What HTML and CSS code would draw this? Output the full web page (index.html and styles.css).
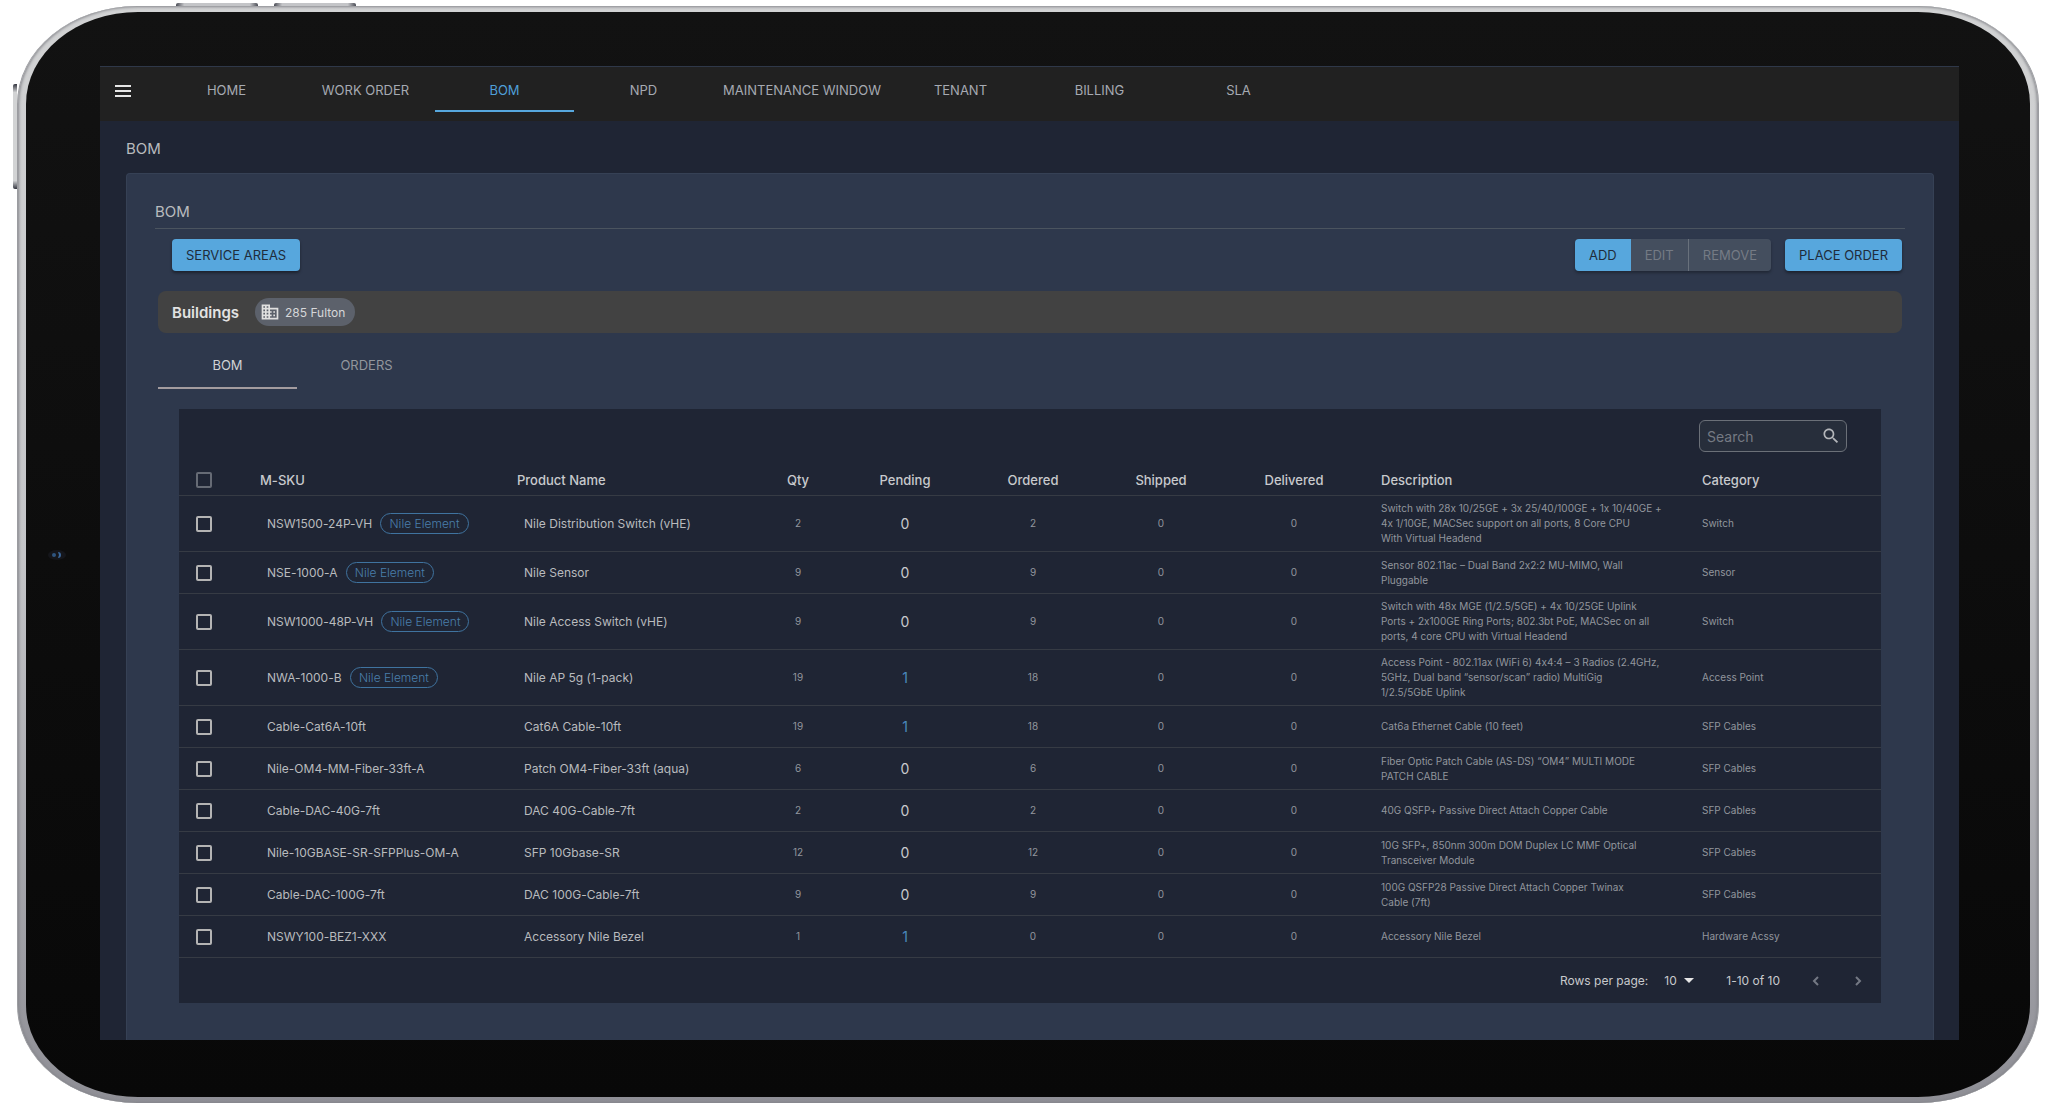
FILE: index.html
```html
<!DOCTYPE html>
<html lang="en">
<head>
    <meta charset="UTF-8">
    <meta name="viewport" content="width=device-width, initial-scale=1.0">
    <title>BOM</title>
    <link rel="stylesheet" href="styles.css">
</head>
<body>
    <div class="tablet">
        <span class="hw-button hw-left"></span>
        <span class="hw-button hw-top-one"></span>
        <span class="hw-button hw-top-two"></span>
        <div class="bezel">
            <svg class="camera" width="20" height="12" viewBox="0 0 20 12" aria-hidden="true">
                <ellipse cx="10" cy="6" rx="9" ry="5" fill="#15161b"/>
                <circle cx="7" cy="6" r="2" fill="#2f5580"/>
                <path d="M11 3a3 3 0 0 1 0 6l1-3z" fill="#3a679b"/>
            </svg>
            <div class="screen">
                <!-- Top navigation -->
                <header class="topbar">
                    <button class="menu-btn" aria-label="Menu">
                        <svg width="16" height="12" viewBox="0 0 16 12"><path d="M0 0h16v2H0zM0 5h16v2H0zM0 10h16v2H0z" fill="#e6e6e6"/></svg>
                    </button>
                    <nav class="nav">
                        <a href="#">HOME</a>
                        <a href="#">WORK ORDER</a>
                        <a href="#" class="active">BOM</a>
                        <a href="#">NPD</a>
                        <a href="#">MAINTENANCE WINDOW</a>
                        <a href="#">TENANT</a>
                        <a href="#">BILLING</a>
                        <a href="#">SLA</a>
                    </nav>
                </header>

                <main class="page">
                    <h1>BOM</h1>
                    <section class="panel">
                        <h2>BOM</h2>

                        <div class="actions">
                            <button class="btn">SERVICE AREAS</button>
                            <div class="btn-group">
                                <button class="btn">ADD</button>
                                <button class="btn" disabled>EDIT</button>
                                <button class="btn" disabled>REMOVE</button>
                            </div>
                            <button class="btn">PLACE ORDER</button>
                        </div>

                        <div class="buildings">
                            <strong>Buildings</strong>
                            <span class="building-chip">
                                <svg width="20" height="20" viewBox="0 0 24 24" aria-hidden="true"><path fill="#e0e0e0" d="M12 7V3H2v18h20V7H12zM6 19H4v-2h2v2zm0-4H4v-2h2v2zm0-4H4V9h2v2zm0-4H4V5h2v2zm4 12H8v-2h2v2zm0-4H8v-2h2v2zm0-4H8V9h2v2zm0-4H8V5h2v2zm10 12h-8v-2h2v-2h-2v-2h2v-2h-2V9h8v10zm-2-8h-2v2h2v-2zm0 4h-2v2h2v-2z"/></svg>
                                285 Fulton
                            </span>
                        </div>

                        <div class="tabs" role="tablist">
                            <button role="tab" aria-selected="true">BOM</button>
                            <button role="tab" aria-selected="false">ORDERS</button>
                        </div>

                        <div class="table-card">
                            <div class="toolbar">
                                <label class="search">
                                    <input type="text" placeholder="Search" aria-label="Search">
                                    <svg width="20" height="20" viewBox="0 0 24 24" aria-hidden="true"><path fill="#b4b6ba" d="M15.5 14h-.79l-.28-.27C15.41 12.59 16 11.11 16 9.5 16 5.91 13.09 3 9.5 3S3 5.91 3 9.5 5.91 16 9.5 16c1.61 0 3.09-.59 4.23-1.57l.27.28v.79l5 4.99L20.49 19l-4.99-5zm-6 0C7.01 14 5 11.99 5 9.5S7.01 5 9.5 5 14 7.01 14 9.5 11.99 14 9.5 14z"/></svg>
                                </label>
                            </div>

                            <table>
                                <colgroup>
                                    <col class="col-check">
                                    <col class="col-sku">
                                    <col class="col-name">
                                    <col class="col-qty">
                                    <col class="col-pending">
                                    <col class="col-ordered">
                                    <col class="col-shipped">
                                    <col class="col-delivered">
                                    <col class="col-desc">
                                    <col class="col-cat">
                                </colgroup>
                                <thead>
                                    <tr>
                                        <th class="check"><input type="checkbox" aria-label="Select all"></th>
                                        <th class="text">M-SKU</th>
                                        <th class="text">Product Name</th>
                                        <th>Qty</th>
                                        <th>Pending</th>
                                        <th>Ordered</th>
                                        <th>Shipped</th>
                                        <th>Delivered</th>
                                        <th class="desc">Description</th>
                                        <th class="desc">Category</th>
                                    </tr>
                                </thead>
                                <tbody>
                                    <tr class="tall">
                                        <td class="check"><input type="checkbox" aria-label="Select NSW1500-24P-VH"></td>
                                        <td class="main">NSW1500-24P-VH <span class="tag">Nile Element</span></td>
                                        <td class="main">Nile Distribution Switch (vHE)</td>
                                        <td>2</td>
                                        <td class="pending">0</td>
                                        <td>2</td>
                                        <td>0</td>
                                        <td>0</td>
                                        <td class="desc">Switch with 28x 10/25GE + 3x 25/40/100GE + 1x 10/40GE +<br>4x 1/10GE, MACSec support on all ports, 8 Core CPU<br>With Virtual Headend</td>
                                        <td class="desc">Switch</td>
                                    </tr>
                                    <tr>
                                        <td class="check"><input type="checkbox" aria-label="Select NSE-1000-A"></td>
                                        <td class="main">NSE-1000-A <span class="tag">Nile Element</span></td>
                                        <td class="main">Nile Sensor</td>
                                        <td>9</td>
                                        <td class="pending">0</td>
                                        <td>9</td>
                                        <td>0</td>
                                        <td>0</td>
                                        <td class="desc">Sensor 802.11ac – Dual Band 2x2:2 MU-MIMO, Wall<br>Pluggable</td>
                                        <td class="desc">Sensor</td>
                                    </tr>
                                    <tr class="tall">
                                        <td class="check"><input type="checkbox" aria-label="Select NSW1000-48P-VH"></td>
                                        <td class="main">NSW1000-48P-VH <span class="tag">Nile Element</span></td>
                                        <td class="main">Nile Access Switch (vHE)</td>
                                        <td>9</td>
                                        <td class="pending">0</td>
                                        <td>9</td>
                                        <td>0</td>
                                        <td>0</td>
                                        <td class="desc">Switch with 48x MGE (1/2.5/5GE) + 4x 10/25GE Uplink<br>Ports + 2x100GE Ring Ports; 802.3bt PoE, MACSec on all<br>ports, 4 core CPU with Virtual Headend</td>
                                        <td class="desc">Switch</td>
                                    </tr>
                                    <tr class="tall">
                                        <td class="check"><input type="checkbox" aria-label="Select NWA-1000-B"></td>
                                        <td class="main">NWA-1000-B <span class="tag">Nile Element</span></td>
                                        <td class="main">Nile AP 5g (1-pack)</td>
                                        <td>19</td>
                                        <td class="pending has-pending">1</td>
                                        <td>18</td>
                                        <td>0</td>
                                        <td>0</td>
                                        <td class="desc">Access Point - 802.11ax (WiFi 6) 4x4:4 – 3 Radios (2.4GHz,<br>5GHz, Dual band “sensor/scan” radio) MultiGig<br>1/2.5/5GbE Uplink</td>
                                        <td class="desc">Access Point</td>
                                    </tr>
                                    <tr>
                                        <td class="check"><input type="checkbox" aria-label="Select Cable-Cat6A-10ft"></td>
                                        <td class="main">Cable-Cat6A-10ft</td>
                                        <td class="main">Cat6A Cable-10ft</td>
                                        <td>19</td>
                                        <td class="pending has-pending">1</td>
                                        <td>18</td>
                                        <td>0</td>
                                        <td>0</td>
                                        <td class="desc">Cat6a Ethernet Cable (10 feet)</td>
                                        <td class="desc">SFP Cables</td>
                                    </tr>
                                    <tr>
                                        <td class="check"><input type="checkbox" aria-label="Select Nile-OM4-MM-Fiber-33ft-A"></td>
                                        <td class="main">Nile-OM4-MM-Fiber-33ft-A</td>
                                        <td class="main">Patch OM4-Fiber-33ft (aqua)</td>
                                        <td>6</td>
                                        <td class="pending">0</td>
                                        <td>6</td>
                                        <td>0</td>
                                        <td>0</td>
                                        <td class="desc">Fiber Optic Patch Cable (AS-DS) “OM4” MULTI MODE<br>PATCH CABLE</td>
                                        <td class="desc">SFP Cables</td>
                                    </tr>
                                    <tr>
                                        <td class="check"><input type="checkbox" aria-label="Select Cable-DAC-40G-7ft"></td>
                                        <td class="main">Cable-DAC-40G-7ft</td>
                                        <td class="main">DAC 40G-Cable-7ft</td>
                                        <td>2</td>
                                        <td class="pending">0</td>
                                        <td>2</td>
                                        <td>0</td>
                                        <td>0</td>
                                        <td class="desc">40G QSFP+ Passive Direct Attach Copper Cable</td>
                                        <td class="desc">SFP Cables</td>
                                    </tr>
                                    <tr>
                                        <td class="check"><input type="checkbox" aria-label="Select Nile-10GBASE-SR-SFPPlus-OM-A"></td>
                                        <td class="main">Nile-10GBASE-SR-SFPPlus-OM-A</td>
                                        <td class="main">SFP 10Gbase-SR</td>
                                        <td>12</td>
                                        <td class="pending">0</td>
                                        <td>12</td>
                                        <td>0</td>
                                        <td>0</td>
                                        <td class="desc">10G SFP+, 850nm 300m DOM Duplex LC MMF Optical<br>Transceiver Module</td>
                                        <td class="desc">SFP Cables</td>
                                    </tr>
                                    <tr>
                                        <td class="check"><input type="checkbox" aria-label="Select Cable-DAC-100G-7ft"></td>
                                        <td class="main">Cable-DAC-100G-7ft</td>
                                        <td class="main">DAC 100G-Cable-7ft</td>
                                        <td>9</td>
                                        <td class="pending">0</td>
                                        <td>9</td>
                                        <td>0</td>
                                        <td>0</td>
                                        <td class="desc">100G QSFP28 Passive Direct Attach Copper Twinax<br>Cable (7ft)</td>
                                        <td class="desc">SFP Cables</td>
                                    </tr>
                                    <tr>
                                        <td class="check"><input type="checkbox" aria-label="Select NSWY100-BEZ1-XXX"></td>
                                        <td class="main">NSWY100-BEZ1-XXX</td>
                                        <td class="main">Accessory Nile Bezel</td>
                                        <td>1</td>
                                        <td class="pending has-pending">1</td>
                                        <td>0</td>
                                        <td>0</td>
                                        <td>0</td>
                                        <td class="desc">Accessory Nile Bezel</td>
                                        <td class="desc">Hardware Acssy</td>
                                    </tr>
                                </tbody>
                            </table>

                            <div class="pagination">
                                <label for="rowsPerPage">Rows per page:</label>
                                <span class="rows-select">
                                    <select id="rowsPerPage">
                                        <option>10</option>
                                        <option>25</option>
                                        <option>50</option>
                                    </select>
                                    <svg width="10" height="5" viewBox="0 0 10 5" aria-hidden="true"><path d="M0 0h10L5 5z" fill="#e6e6e6"/></svg>
                                </span>
                                <span class="range">1-10 of 10</span>
                                <button class="page-btn" aria-label="Previous page"><svg width="8" height="10" viewBox="0 0 8 10"><path d="M6 1L2 5l4 4" fill="none" stroke="#747984" stroke-width="2"/></svg></button>
                                <button class="page-btn" aria-label="Next page"><svg width="8" height="10" viewBox="0 0 8 10"><path d="M2 1l4 4-4 4" fill="none" stroke="#747984" stroke-width="2"/></svg></button>
                            </div>
                        </div>
                    </section>
                </main>
            </div>
        </div>
    </div>
</body>
</html>
```
FILE: styles.css
```css
* {
    box-sizing: border-box;
}
body {
    margin: 0;
    padding: 6px 9px 5px 17px;
    height: 100vh;
    background: #fff;
    font-family: Inter, "Open Sans", sans-serif;
    font-size: 12px;
    font-variant-ligatures: no-contextual; /* keep "10x" as a plain x */
    color: #c8cacd;
}
button, input, select {
    font: inherit;
    color: inherit;
}
button {
    border: none;
    background: none;
    padding: 0;
    cursor: pointer;
}

/* Device frame */
.tablet {
    position: relative;
    height: 100%;
    padding: 6px 8px;
    border: 1px solid #9b9ca0;
    border-width: 0 1px;
    border-radius: 120px / 98px;
    background: linear-gradient(#d2d3d4, #c4c5c8 50%, #8f8f96);
    box-shadow: inset 0 0 3px 1px #85868b;
}
.hw-button {
    position: absolute;
    background: linear-gradient(90deg, #4a4c55, #c4c5c8 10%, #c4c5c8 90%, #4a4c55);
}
.hw-left {
    left: -5px;
    top: 78px;
    width: 4px;
    height: 105px;
    border-radius: 2px 0 0 2px;
    background: linear-gradient(#33353f, #d2d3d4 8%, #d2d3d4 92%, #33353f);
}
.hw-top-one, .hw-top-two {
    top: -3px;
    width: 82px;
    height: 3px;
    border-radius: 2px 2px 0 0;
}
.hw-top-one {
    left: 158px;
}
.hw-top-two {
    left: 256px;
}
.bezel {
    position: relative;
    height: 100%;
    padding: 54px 71px 57px 74px;
    border-radius: 112px / 92px;
    background: linear-gradient(#121212, #080808);
}
.camera {
    position: absolute;
    left: 21px;
    top: calc(50% - 6px);
}
.screen {
    display: flex;
    flex-direction: column;
    height: 100%;
    overflow: hidden;
    background: #1f2534;
}

/* Top navigation */
.topbar {
    display: flex;
    height: 55px;
    flex: none;
    border-top: 1px solid #2f3849;
    background: #212121;
}
.menu-btn {
    display: flex;
    width: 57px;
    height: 48px;
    padding-left: 15px;
    align-items: center;
}
.nav {
    display: flex;
}
.nav a {
    display: flex;
    align-items: center;
    justify-content: center;
    min-width: 139px;
    height: 45px;
    padding: 2px 10px 0;
    border-bottom: 2px solid transparent;
    color: #a6aab2;
    font-size: 13px;
    text-decoration: none;
}
.nav .active {
    color: #4f9fd8;
    border-color: #57a7dd;
}

/* Page */
.page {
    display: flex;
    flex: 1;
    flex-direction: column;
    padding: 0 25px 0 26px;
}
h1, h2 {
    margin: 0;
    font-size: 15px;
    font-weight: 400;
    line-height: 20px;
    color: #b9bbbe;
}
h1 {
    padding: 18px 0 14px;
}
.panel {
    flex: 1;
    padding: 28px 31px 36px;
    border: 1px solid #364155;
    border-bottom: none;
    border-radius: 4px 4px 0 0;
    background: #2e384c;
}
h2 {
    margin: 0 -3px;
    padding-bottom: 6px;
    border-bottom: 1px solid #4b545f;
}
.actions {
    display: flex;
    gap: 14px;
    padding: 10px 0 20px 14px;
}
.btn {
    height: 32px;
    padding: 0 14px;
    border-radius: 4px;
    background: #57a7dd;
    color: #202c3b;
    font-size: 13px;
    box-shadow: 0 2px 3px rgba(0, 0, 0, 0.4);
}
.btn-group {
    display: flex;
    margin-left: auto;
    border-radius: 4px;
    box-shadow: 0 2px 3px rgba(0, 0, 0, 0.3);
}
.btn-group .btn {
    border-radius: 0;
    box-shadow: none;
}
.btn-group .btn:first-child {
    border-radius: 4px 0 0 4px;
}
.btn-group .btn:last-child {
    border-left: 1px solid #69717c;
    border-radius: 0 4px 4px 0;
}
.btn:disabled {
    background: #444e5e;
    color: #757b85;
    cursor: default;
}
.buildings {
    display: flex;
    align-items: center;
    gap: 16px;
    height: 42px;
    padding-left: 14px;
    border-radius: 8px;
    background: #424242;
}
.buildings strong {
    font-size: 15px;
    font-weight: 600;
    color: #e2e2e2;
}
.building-chip {
    display: flex;
    align-items: center;
    gap: 5px;
    height: 28px;
    padding: 0 10px 0 5px;
    border-radius: 14px;
    background: #5c616b;
    color: #d6d7d9;
}
.tabs {
    display: flex;
    padding: 10px 0 20px;
}
.tabs button {
    width: 139px;
    height: 46px;
    border-bottom: 2px solid transparent;
    color: #92969d;
    font-size: 13px;
}
.tabs [aria-selected="true"] {
    color: #d0d2d5;
    border-color: #a39c9f;
}

/* Table */
.table-card {
    margin: 0 21px;
    background: #1f2534;
}
.toolbar {
    display: flex;
    justify-content: flex-end;
    padding: 11px 34px 12px 0;
}
.search {
    display: flex;
    align-items: center;
    width: 148px;
    height: 32px;
    padding: 0 5px 0 7px;
    border: 1px solid #6b7078;
    border-radius: 6px;
    background: #272e3b;
}
.search input {
    flex: 1;
    min-width: 0;
    padding: 0;
    border: none;
    outline: none;
    background: none;
    font-size: 14px;
}
.search input::placeholder {
    color: #757a83;
}
table {
    width: 100%;
    table-layout: fixed;
    border-spacing: 0;
}
.col-check { width: 74px; }
.col-sku { width: 257px; }
.col-name { width: 238px; }
.col-qty { width: 100px; }
.col-pending { width: 114px; }
.col-ordered { width: 142px; }
.col-shipped { width: 114px; }
.col-delivered { width: 152px; }
.col-desc { width: 321px; }
.col-cat { width: 190px; }
th, td {
    padding: 0;
    border-bottom: 1px solid #363b44;
    text-align: center;
    white-space: nowrap;
}
th {
    height: 32px;
    font-size: 13px;
    font-weight: 500;
    color: #c8cacd;
}
td {
    height: 42px;
    font-size: 10px;
    line-height: 15px;
    color: #92969d;
}
.tall td {
    height: 56px;
}
.text, .main, .desc, .check {
    text-align: left;
}
.text {
    padding-left: 7px;
}
.main {
    padding-left: 14px;
    font-size: 12px;
    color: #b9bbbe;
}
.desc {
    padding-left: 11px;
}
.check {
    padding-left: 17px;
}
.check input {
    display: block;
    appearance: none;
    width: 16px;
    height: 16px;
    margin: 0;
    border: 2px solid #b4b4b4;
    border-radius: 2px;
}
.check input:checked {
    background: #57a7dd;
}
th.check input {
    border-color: #666b75;
}
.pending {
    font-size: 14px;
    color: #c8cacd;
}
.has-pending {
    color: #4a89bd;
}
.tag {
    display: inline-block;
    margin-left: 5px;
    padding: 0 8px;
    border: 1px solid #3f739f;
    border-radius: 11px;
    font-size: 12px;
    font-weight: 300;
    line-height: 19px;
    color: #4a7fab;
}
.pagination {
    display: flex;
    align-items: center;
    justify-content: flex-end;
    height: 45px;
    padding-right: 13px;
    color: #c8cacd;
}
.rows-select {
    display: flex;
    align-items: center;
    gap: 5px;
    margin: 0 32px 0 16px;
}
.rows-select select {
    appearance: none;
    padding: 0;
    border: none;
    outline: none;
    background: none;
}
.range {
    margin-right: 26px;
}
.page-btn {
    display: flex;
    align-items: center;
    justify-content: center;
    width: 20px;
    height: 20px;
}
.page-btn + .page-btn {
    margin-left: 22px;
}
```
